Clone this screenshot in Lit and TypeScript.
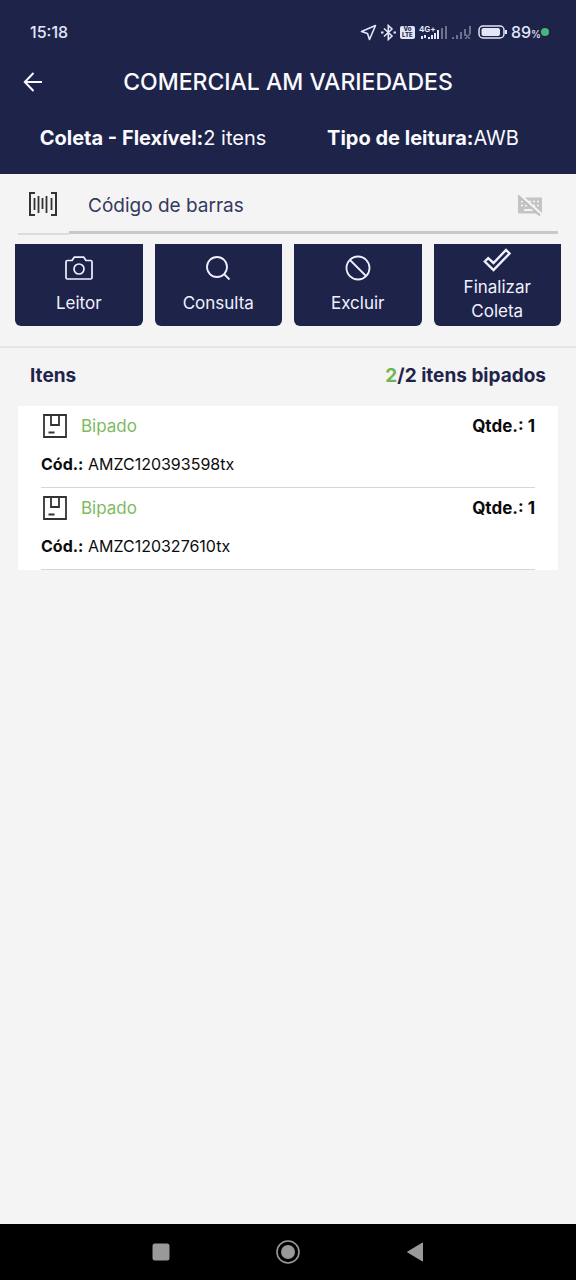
import { LitElement, html, css, svg } from "lit";
import { customElement, property, state } from "lit/decorators.js";

interface Item {
  code: string;
  quantity: number;
  status: string;
}

const backIcon = svg`<svg width="24" height="24" viewBox="0 0 24 24" fill="none" stroke="currentColor" stroke-width="2"><path d="M21 12H4M12.5 3L3.8 12l8.7 9"/></svg>`;

const barcodeIcon = svg`<svg width="30" height="26" viewBox="0 0 30 26" fill="none" stroke="#333" stroke-width="2"><path d="M7 2H2v22h5M23 2h5v22h-5"/><path d="M6.5 7v12M10.5 5v17M14.5 7v11M18.5 5v17M23.5 7v12" stroke-width="1.8"/></svg>`;

const keyboardOffIcon = svg`<svg width="26" height="24" viewBox="0 0 26 24"><path d="M1 3.5h24v16H1z" fill="#c4c4c4"/><path d="M4 7.5h18M4 11.5h18" stroke="#f4f4f4" stroke-width="1.5" stroke-dasharray="2 2"/><path d="M7 16h10" stroke="#f4f4f4" stroke-width="2"/><path d="M2 0l23 21" stroke="#f4f4f4" stroke-width="3"/><path d="M1 1.5l22 20" stroke="#bdbdbd" stroke-width="2"/></svg>`;

const cameraIcon = svg`<svg width="30" height="26" viewBox="0 0 30 26" fill="none" stroke="currentColor" stroke-width="1.7" stroke-linejoin="round"><path d="M3.5 5.5H8l2.2-3.3h9.6L22 5.500h4.500c1 0 1.500.5 1.500 1.500v15.500c0 1-.5 1.500-1.500 1.500h-23c-1 0-1.500-.5-1.500-1.500V7c0-1 .5-1.500 1.500-1.500z"/><circle cx="15" cy="14" r="5"/></svg>`;

const searchIcon = svg`<svg width="26" height="26" viewBox="0 0 26 26" fill="none" stroke="currentColor" stroke-width="1.8"><circle cx="12" cy="12" r="10"/><path d="M19 19l5.500 5.500"/></svg>`;

const forbidIcon = svg`<svg width="26" height="26" viewBox="0 0 26 26" fill="none" stroke="currentColor" stroke-width="1.8"><circle cx="13" cy="13" r="11.500"/><path d="M5 5l16 16"/></svg>`;

const checkIcon = svg`<svg width="28" height="24" viewBox="0 0 28 24" fill="none" stroke="currentColor" stroke-width="2.4"><path d="M1.800 13.500l3.400-3.400 5.300 4.900L23 2l3.500 3.500L10.500 22z"/></svg>`;

const boxIcon = svg`<svg width="24" height="24" viewBox="0 0 24 24" fill="none" stroke="#333" stroke-width="1.800"><path d="M1 1h22v22H1zM8 1v10h8V1M5.500 18.500h6"/></svg>`;

@customElement("phone-status")
export class PhoneStatus extends LitElement {
  static styles = css`
    :host {
      display: flex;
      align-items: center;
      justify-content: space-between;
      padding: 20px 27px 14px 30px;
      color: #e3e5f8;
      font-size: 16px;
      font-weight: 500;
      line-height: 24px;
    }
    .icons {
      display: flex;
      align-items: center;
      gap: 4px;
    }
    .icons svg {
      display: block;
    }
    .volte {
      width: 15px;
      height: 13px;
      border-radius: 2px;
      background: #e3e5f8;
      color: #1e2349;
      font-size: 6px;
      font-weight: 800;
      line-height: 6px;
      text-align: center;
    }
    .network {
      display: grid;
      grid-template-columns: 17px 12px;
      align-items: end;
    }
    .generation {
      font-size: 8px;
      font-weight: 700;
      line-height: 8px;
    }
    .battery {
      display: flex;
      align-items: center;
      gap: 3px;
      padding-left: 2px;
    }
    .level {
      display: flex;
      align-items: center;
    }
    .percent {
      font-size: 10px;
      line-height: 16px;
      padding-top: 4px;
    }
    .dot {
      width: 8px;
      height: 8px;
      border-radius: 50%;
      background: #43b873;
    }
  `;

  render() {
    return html`
      <span>15:18</span>
      <div class="icons">
        <svg width="17" height="17" viewBox="0 0 17 17" fill="none" stroke="currentColor" stroke-width="1.6" stroke-linejoin="round"><path d="M1.500 7.500L15.500 1.500 9.500 15.500 7.500 9.500z"/></svg>
        <svg width="15" height="17" viewBox="0 0 15 17" fill="none" stroke="currentColor" stroke-width="1.600"><path d="M3 4.500l8 7.500-3.700 3.500v-14L11 5l-8 7.500"/><path d="M0 8.500h2.500M12.500 8.500H15" stroke-width="2"/></svg>
        <div class="volte">Vo<br />LTE</div>
        <div class="network">
          <div>
            <div class="generation">4G+</div>
            <svg width="17" height="6" viewBox="0 0 17 6" fill="currentColor"><path d="M2 3h2v3H2zM5 2h2v3H5zM9 4h2v2H9zM12 2h2v4h-2zM15 0h2v6h-2z"/></svg>
          </div>
          <svg width="12" height="14" viewBox="0 0 12 14" fill="currentColor"><path d="M1 5h2v9H1z"/><path d="M5 3h2v11H5zM9 1h2v13H9z" opacity=".4"/></svg>
        </div>
        <svg width="20" height="14" viewBox="0 0 20 14" fill="currentColor" opacity=".4"><path d="M0 12h2v2H0zM4 10h2v4H4zM8 7h2v7H8zM12 4h2v7h-2zM17 1h2v8h-2z"/><path d="M13 9l5 5M18 9l-5 5" stroke="currentColor" stroke-width="1.500"/></svg>
        <div class="battery">
          <svg width="30" height="14" viewBox="0 0 30 14"><rect x="1" y="1" width="25" height="12" rx="4" fill="none" stroke="currentColor" stroke-width="1.500"/><rect x="3.500" y="3" width="18.500" height="8" rx="2" fill="currentColor"/><path d="M28 5v4" stroke="currentColor" stroke-width="2"/></svg>
          <div class="level"><span>89</span><span class="percent">%</span><span class="dot"></span></div>
        </div>
      </div>
    `;
  }
}

@customElement("item-row")
export class ItemRow extends LitElement {
  @property({ attribute: false }) item!: Item;

  static styles = css`
    :host {
      display: block;
      margin: 0 23px;
      padding: 6px 0 9px;
      border-bottom: 1px solid #d6d6d6;
      color: #0c0c0c;
      font-size: 16px;
      line-height: 28px;
    }
    .top {
      display: flex;
      align-items: center;
      gap: 14px;
      padding-left: 2px;
      font-size: 17px;
    }
    .status {
      flex: 1;
      color: #7dbb61;
    }
    .code {
      padding-top: 10px;
    }
    .code strong,
    .quantity {
      font-weight: 700;
    }
    svg {
      display: block;
    }
  `;

  render() {
    return html`
      <div class="top">
        ${boxIcon}
        <span class="status">${this.item.status}</span>
        <span class="quantity">Qtde.: ${this.item.quantity}</span>
      </div>
      <div class="code"><strong>Cód.:</strong> ${this.item.code}</div>
    `;
  }
}

@customElement("app-root")
export class AppRoot extends LitElement {
  @state() private items: Item[] = [
    { code: "AMZC120393598tx", quantity: 1, status: "Bipado" },
    { code: "AMZC120327610tx", quantity: 1, status: "Bipado" },
  ];

  private actions = [
    { label: "Leitor", icon: cameraIcon },
    { label: "Consulta", icon: searchIcon },
    { label: "Excluir", icon: forbidIcon },
    { label: "Finalizar Coleta", icon: checkIcon },
  ];

  static styles = css`
    :host {
      display: flex;
      flex-direction: column;
      min-height: 100vh;
      background: #f4f4f4;
      color: #1e2349;
      font-family: Inter, "Noto Sans", sans-serif;
    }
    * {
      box-sizing: border-box;
    }
    button,
    input {
      font: inherit;
      color: inherit;
      border: 0;
      margin: 0;
      padding: 0;
      background: none;
    }
    svg {
      display: block;
    }
    .header {
      background: #1e2349;
      color: #fafaff;
    }
    .title-bar {
      display: grid;
      grid-template-columns: 24px 1fr 24px;
      align-items: center;
      padding: 8px 21px;
    }
    .title {
      margin: 0;
      text-align: center;
      font-size: 23px;
      font-weight: 500;
      line-height: 32px;
    }
    .summary {
      display: grid;
      grid-template-columns: 1fr 1fr;
      padding: 18px 18px 22px;
      font-size: 20px;
      line-height: 28px;
      text-align: center;
    }
    .summary strong {
      font-weight: 700;
    }
    .search {
      display: grid;
      grid-template-columns: 51px 1fr;
      padding: 0 18px;
    }
    .scan {
      display: flex;
      align-items: center;
      padding-left: 10px;
      margin-bottom: -1px;
      border-bottom: 2px solid #dcdcdc;
    }
    .field {
      display: flex;
      align-items: center;
      height: 60px;
      padding: 6px 15px 0 19px;
      border-bottom: 3px solid #c9c9c9;
    }
    .field input {
      flex: 1;
      min-width: 0;
      font-size: 19px;
      line-height: 28px;
      outline: none;
    }
    .field input::placeholder {
      color: #353960;
      opacity: 1;
    }
    .actions {
      display: grid;
      grid-template-columns: repeat(4, 1fr);
      gap: 12px;
      padding: 10px 15px 20px;
      border-bottom: 2px solid #e4e4e4;
    }
    .action {
      display: flex;
      flex-direction: column;
      align-items: center;
      justify-content: center;
      gap: 10px;
      height: 82px;
      padding: 0 20px;
      border-radius: 0 0 6px 6px;
      background: #1e2349;
      color: #f0f1ff;
      font-size: 17px;
      line-height: 24px;
      cursor: pointer;
    }
    .action:last-child {
      gap: 3px;
    }
    .list-head {
      display: flex;
      justify-content: space-between;
      padding: 14px 30px 16px;
      font-size: 19px;
      font-weight: 700;
      line-height: 28px;
    }
    .list-head h2 {
      margin: 0;
      font: inherit;
    }
    .done {
      color: #6fb552;
    }
    .list {
      margin: 0 18px;
      background: #fff;
    }
    .nav {
      display: grid;
      grid-template-columns: repeat(3, 127px);
      justify-content: center;
      height: 56px;
      margin-top: auto;
      background: #000;
    }
    .nav button {
      display: grid;
      place-items: center;
    }
  `;

  render() {
    const total = this.items.length;
    return html`
      <header class="header">
        <phone-status></phone-status>
        <div class="title-bar">
          <button aria-label="Voltar">${backIcon}</button>
          <h1 class="title">COMERCIAL AM VARIEDADES</h1>
        </div>
        <div class="summary">
          <div><strong>Coleta - Flexível:</strong>${total} itens</div>
          <div><strong>Tipo de leitura:</strong>AWB</div>
        </div>
      </header>
      <div class="search">
        <button class="scan" aria-label="Ler código">${barcodeIcon}</button>
        <div class="field">
          <input type="text" aria-label="Código de barras" placeholder="Código de barras" />
          <button aria-label="Teclado">${keyboardOffIcon}</button>
        </div>
      </div>
      <div class="actions">
        ${this.actions.map((a) => html`<button class="action">${a.icon}<span>${a.label}</span></button>`)}
      </div>
      <div class="list-head">
        <h2>Itens</h2>
        <div><span class="done">${total}</span>/${total} itens bipados</div>
      </div>
      <div class="list">${this.items.map((item) => html`<item-row .item=${item}></item-row>`)}</div>
      <nav class="nav">
        <button aria-label="Recentes"><svg width="18" height="18" viewBox="0 0 18 18"><rect x="0.500" y="0.500" width="17" height="17" rx="2.500" fill="#999"/></svg></button>
        <button aria-label="Início"><svg width="24" height="24" viewBox="0 0 24 24"><circle cx="12" cy="12" r="11" fill="none" stroke="#999" stroke-width="1.600"/><circle cx="12" cy="12" r="7" fill="#999"/></svg></button>
        <button aria-label="Voltar"><svg width="18" height="20" viewBox="0 0 18 20"><path d="M1.500 10L16.500 1v18z" fill="#999" stroke="#999" stroke-linejoin="round"/></svg></button>
      </nav>
    `;
  }
}
